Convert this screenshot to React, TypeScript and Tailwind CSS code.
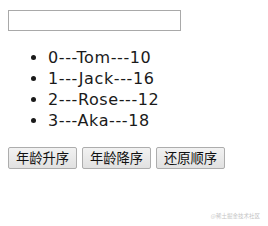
import React from "react";

const people = [
  { id: 0, name: "Tom", age: 10 },
  { id: 1, name: "Jack", age: 16 },
  { id: 2, name: "Rose", age: 12 },
  { id: 3, name: "Aka", age: 18 },
];

const btn =
  "h-[22px] w-[69px] rounded-[2px] border border-[#adadad] bg-gradient-to-b from-[#f2f2f2] to-[#e1e1e1] text-[13.3px] leading-none text-[#111]";

export default function App() {
  return (
    <div
      className="relative h-[226px] w-[268px] overflow-hidden bg-white px-2 pt-[10px] text-black"
      style={{ fontFamily: '"Noto Sans", "Noto Sans CJK SC", sans-serif' }}
    >
      <input type="text" className="block h-[21px] w-[173px] border border-[#a9a9a9] bg-white outline-none" />

      <ul
        className="mt-4 list-disc pl-10 text-[16px] leading-[21px] tracking-[0.6px] text-[#1a1a1a]"
        style={{ fontFamily: '"DejaVu Sans", "Noto Sans CJK SC", sans-serif' }}
      >
        {people.map((p) => (
          <li key={p.id}>
            {p.id}---{p.name}---{p.age}
          </li>
        ))}
      </ul>

      <div className="mt-4 flex gap-[5px]" style={{ fontFamily: '"Noto Sans CJK SC", sans-serif' }}>
        <button type="button" className={btn}>年龄升序</button>
        <button type="button" className={btn}>年龄降序</button>
        <button type="button" className={btn}>还原顺序</button>
      </div>

      {/* watermark */}
      <div
        className="absolute bottom-[6px] right-[8px] text-[5.5px] text-[#c4c4c4]"
        style={{ fontFamily: '"Noto Sans CJK SC", sans-serif' }}
      >
        @稀土掘金技术社区
      </div>
    </div>
  );
}
